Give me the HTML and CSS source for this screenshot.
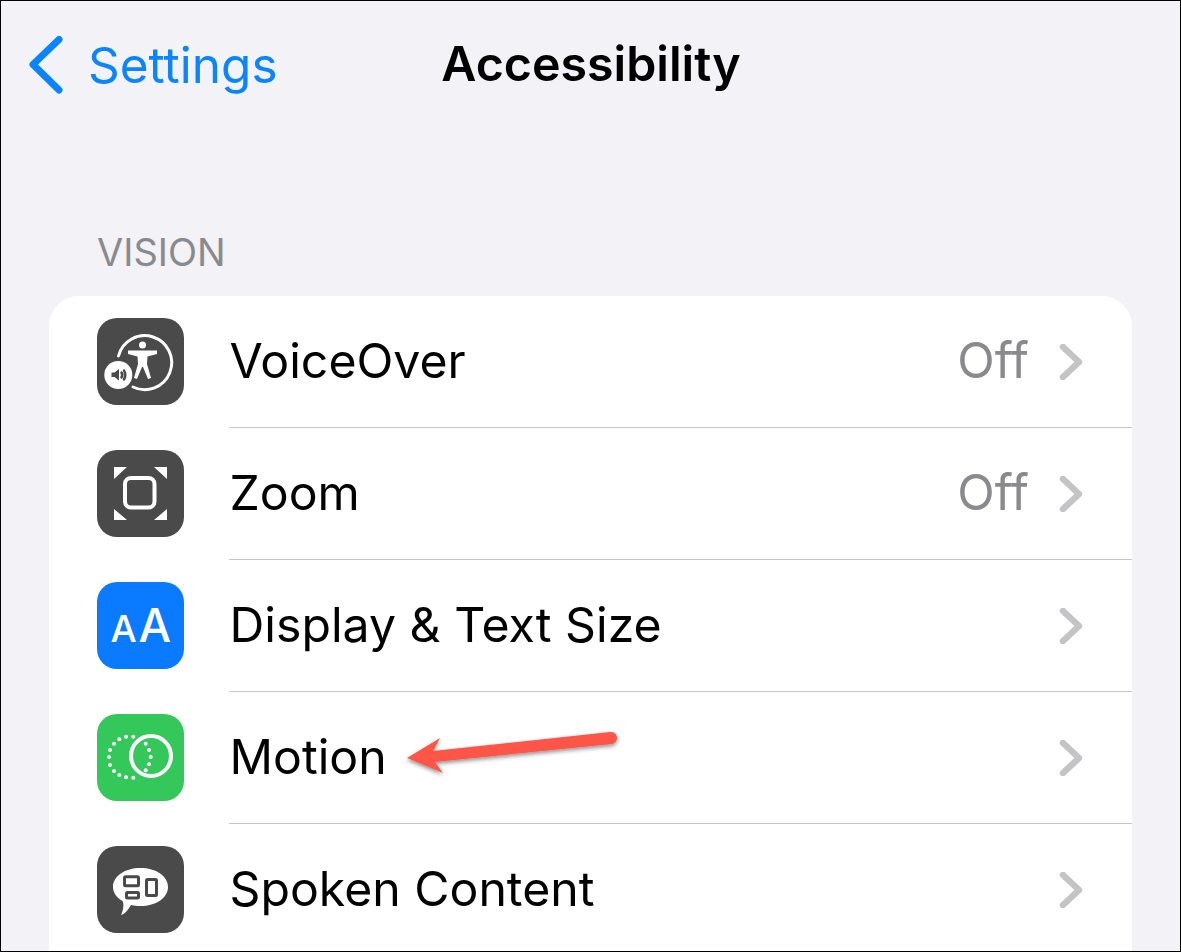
FILE: index.html
```html
<!DOCTYPE html>
<html lang="en">
<head>
    <meta charset="UTF-8">
    <title>Accessibility</title>
    <link rel="stylesheet" href="styles.css">
</head>
<body>
    <div class="screen">
        <header class="navbar">
            <a class="back">
                <svg class="back-icon" width="36" height="60" viewBox="0 0 36 60"><path d="M31 4.500 L5 29.500 L31 55" /></svg>
                <span>Settings</span>
            </a>
            <h1>Accessibility</h1>
        </header>

        <h2 class="section-title">VISION</h2>

        <ul class="list">
            <li class="row">
                <span class="icon icon-dark">
                    <svg width="87" height="87" viewBox="0 0 87 87">
                        <path class="line thin" d="M21.500 38 A27 27 0 1 1 36 69" />
                        <circle class="fill" cx="45.500" cy="27" r="3.500" />
                        <path class="fill" d="M31 32.500 L60 32.500 L60 36 L50.500 38.500 L50 46 L54 60 L51 61 L46 49 L45 49 L40 61 L37 60 L41 46 L40.500 38.500 L31 36 Z" />
                        <circle class="fill" cx="21.300" cy="57" r="14" />
                        <path class="dark" d="M14.500 54.500 L17.500 54.500 L22 51 L22 62.500 L17.500 59 L14.500 59 Z" />
                        <path class="dark-line" d="M24.500 54.500 Q26 57 24.500 59.500 M27 52.500 Q29.500 57 27 61.500" />
                    </svg>
                </span>
                <div class="row-body">
                    <span class="label">VoiceOver</span>
                    <span class="value">Off</span>
                    <svg class="chevron" width="24" height="36" viewBox="0 0 24 36"><path d="M4 3 L20 18 L4 33" /></svg>
                </div>
            </li>
            <li class="row">
                <span class="icon icon-dark">
                    <svg width="87" height="87" viewBox="0 0 87 87">
                        <rect class="line" x="28" y="28" width="29.500" height="29.500" rx="6" />
                        <path class="fill" d="M17 17 L30 17 L17 29 Z M70 17 L57 17 L70 29 Z M17 70 L30 70 L17 59 Z M70 70 L57 70 L70 59 Z" />
                    </svg>
                </span>
                <div class="row-body">
                    <span class="label">Zoom</span>
                    <span class="value">Off</span>
                    <svg class="chevron" width="24" height="36" viewBox="0 0 24 36"><path d="M4 3 L20 18 L4 33" /></svg>
                </div>
            </li>
            <li class="row">
                <span class="icon icon-blue">
                    <svg width="87" height="87" viewBox="0 0 87 87">
                        <text class="icon-text" x="13.500" y="60" font-size="37">A</text>
                        <text class="icon-text" x="41.500" y="60" font-size="46">A</text>
                    </svg>
                </span>
                <div class="row-body">
                    <span class="label">Display &amp; Text Size</span>
                    <svg class="chevron" width="24" height="36" viewBox="0 0 24 36"><path d="M4 3 L20 18 L4 33" /></svg>
                </div>
            </li>
            <li class="row">
                <span class="icon icon-green">
                    <svg width="87" height="87" viewBox="0 0 87 87">
                        <circle class="line" cx="54" cy="42" r="20" />
                        <g class="fill">
                            <circle cx="36.300" cy="22.700" r="2" />
                            <circle cx="29" cy="22.700" r="2" />
                            <circle cx="22.300" cy="25.300" r="2" />
                            <circle cx="17" cy="29.700" r="2" />
                            <circle cx="13" cy="36" r="2" />
                            <circle cx="12" cy="43" r="2" />
                            <circle cx="13" cy="51" r="2" />
                            <circle cx="17" cy="57" r="2" />
                            <circle cx="22.300" cy="61" r="2" />
                            <circle cx="29" cy="63.300" r="2" />
                            <circle cx="36.300" cy="63.700" r="2" />
                            <circle cx="48.700" cy="29.700" r="2" />
                            <circle cx="52" cy="36" r="2" />
                            <circle cx="53.700" cy="43" r="2" />
                            <circle cx="52" cy="50.300" r="2" />
                            <circle cx="48.700" cy="56.300" r="2" />
                        </g>
                    </svg>
                </span>
                <div class="row-body">
                    <span class="label">Motion</span>
                    <svg class="chevron" width="24" height="36" viewBox="0 0 24 36"><path d="M4 3 L20 18 L4 33" /></svg>
                </div>
            </li>
            <li class="row">
                <span class="icon icon-dark">
                    <svg width="87" height="87" viewBox="0 0 87 87">
                        <path class="fill" d="M43.500 22 C59 22 71 30 71 41 C71 52 59 60 43.500 60 C40 60 37 59.600 34 59 C31 64 28 68 24 69 C26 65 27 60 26 55.500 C20 52 16 47 16 41 C16 30 28 22 43.500 22 Z" />
                        <rect class="dark-box" x="27.500" y="30.800" width="14" height="9" rx="1" />
                        <rect class="dark-box" x="29.500" y="46.500" width="12" height="5.500" rx="1" />
                        <rect class="dark-box" x="49.500" y="33.500" width="10" height="16" rx="1" />
                    </svg>
                </span>
                <div class="row-body">
                    <span class="label">Spoken Content</span>
                    <svg class="chevron" width="24" height="36" viewBox="0 0 24 36"><path d="M4 3 L20 18 L4 33" /></svg>
                </div>
            </li>
        </ul>

        <svg class="arrow" width="230" height="60" viewBox="0 0 230 60">
            <defs>
                <filter id="arrowShadow" x="-10%" y="-40%" width="120%" height="200%">
                    <feDropShadow dx="0" dy="2" stdDeviation="2" flood-color="#000" flood-opacity="0.45" />
                </filter>
            </defs>
            <path d="M7 38 L40 18 L33 31 L210 12 A6 6 0 0 1 212 24 L35 42 L43 53 Z" fill="#fe5549" filter="url(#arrowShadow)" />
        </svg>
    </div>
</body>
</html>
```

FILE: styles.css
```css
* {
    box-sizing: border-box;
}
html, body {
    margin: 0;
    padding: 0;
}
.screen {
    position: relative;
    width: 1181px;
    height: 952px;
    overflow: hidden;
    background-color: #f2f2f7;
    border: 1px solid #000;
    font-family: Inter, "Liberation Sans", sans-serif;
    color: #000;
}
.navbar {
    position: relative;
    height: 124px;
    text-align: center;
}
.navbar h1 {
    margin: 0;
    padding-top: 33px;
    width: 1180px;
    font-size: 48.300px;
    line-height: 60px;
    font-weight: 600;
}
.back {
    position: absolute;
    left: 27px;
    top: 33px;
    display: flex;
    align-items: center;
    gap: 24px;
    color: #0a84ff;
    font-size: 49.500px;
    line-height: 60px;
}
.back span {
    padding-top: 1px;
}
.back-icon path {
    fill: none;
    stroke: #0a84ff;
    stroke-width: 7;
    stroke-linecap: round;
    stroke-linejoin: round;
}
.section-title {
    margin: 0;
    padding: 105px 0 0 96px;
    height: 171px;
    font-size: 38px;
    line-height: 44px;
    font-weight: 400;
    color: #8a8a8e;
}
.list {
    list-style: none;
    margin: 0 48px;
    padding: 0;
    background-color: #fff;
    border-radius: 30px 30px 0 0;
}
.row {
    display: flex;
    align-items: center;
    height: 132px;
    padding-left: 48px;
}
.icon {
    flex: none;
    width: 87px;
    height: 87px;
    margin-bottom: 2px;
    border-radius: 20px;
}
.icon svg {
    display: block;
}
.icon-dark {
    background-color: #4a4a4a;
}
.icon-blue {
    background-color: #0a7aff;
}
.icon-green {
    background-color: #34c759;
}
.row-body {
    flex: 1;
    height: 100%;
    margin-left: 45px;
    display: flex;
    align-items: center;
    padding-right: 49px;
    border-bottom: 1px solid #c6c6c8;
}
.label {
    flex: 1;
    padding: 0 0 1px 0.500px;
    font-size: 48.200px;
    line-height: 60px;
}
.value {
    padding-bottom: 1px;
    font-size: 49px;
    line-height: 60px;
    color: #8a8a8e;
    margin-right: 30px;
}
.chevron {
    margin-top: 1px;
}
.chevron path {
    fill: none;
    stroke: #c4c4c7;
    stroke-width: 6.500;
    stroke-linecap: round;
    stroke-linejoin: round;
}
.line {
    fill: none;
    stroke: #fff;
    stroke-width: 4;
    stroke-linecap: round;
    stroke-linejoin: round;
}
.thin {
    stroke-width: 3;
}
.fill {
    fill: #fff;
}
.icon-text {
    fill: #fff;
    font-family: Inter, "Liberation Sans", sans-serif;
    font-weight: 500;
}
.dark {
    fill: #4a4a4a;
}
.dark-line {
    fill: none;
    stroke: #4a4a4a;
    stroke-width: 2.500;
    stroke-linecap: round;
}
.dark-box {
    fill: #fff;
    stroke: #4a4a4a;
    stroke-width: 3;
}
.arrow {
    position: absolute;
    left: 399px;
    top: 719px;
}
```
